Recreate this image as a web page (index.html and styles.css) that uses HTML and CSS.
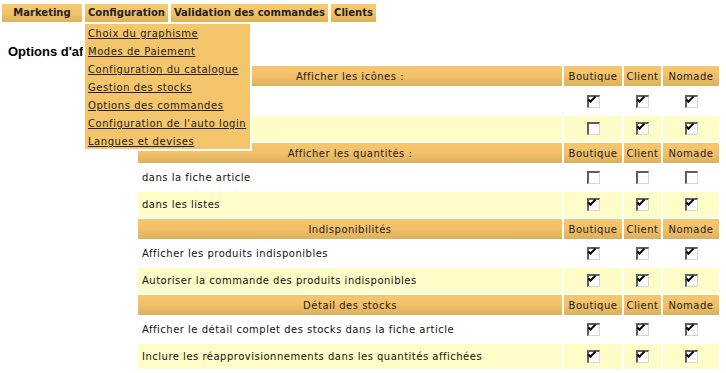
FILE: index.html
```html
<!DOCTYPE html>
<html lang="fr">
<head>
  <meta charset="UTF-8" />
  <title>Options d'affichage des stocks</title>
  <link rel="stylesheet" href="styles.css">
</head>
<body>
  <div class="menubar">
    <div class="menu-item menu-wide">Marketing</div>
    <div class="menu-item">Configuration
      <div class="submenu">
        <a href="#">Choix du graphisme</a>
        <a href="#">Modes de Paiement</a>
        <a href="#">Configuration du catalogue</a>
        <a href="#">Gestion des stocks</a>
        <a href="#">Options des commandes</a>
        <a href="#">Configuration de l'auto login</a>
        <a href="#">Langues et devises</a>
      </div>
    </div>
    <div class="menu-item">Validation des commandes</div>
    <div class="menu-item">Clients</div>
  </div>

  <h1 class="page-title">Options d'affichage des stocks</h1>

  <table class="options">
    <colgroup>
      <col class="col-label">
      <col class="col-boutique">
      <col class="col-client">
      <col class="col-nomade">
    </colgroup>
    <tr class="head">
      <td>Afficher les icônes :</td><td>Boutique</td><td>Client</td><td>Nomade</td>
    </tr>
    <tr class="row tall">
      <td class="label">dans la fiche article</td>
      <td><span class="cb on"></span></td><td><span class="cb on"></span></td><td><span class="cb on"></span></td>
    </tr>
    <tr class="row alt">
      <td class="label">dans les listes</td>
      <td><span class="cb"></span></td><td><span class="cb on"></span></td><td><span class="cb on"></span></td>
    </tr>

    <tr class="head">
      <td>Afficher les quantités :</td><td>Boutique</td><td>Client</td><td>Nomade</td>
    </tr>
    <tr class="row">
      <td class="label">dans la fiche article</td>
      <td><span class="cb"></span></td><td><span class="cb"></span></td><td><span class="cb"></span></td>
    </tr>
    <tr class="row alt">
      <td class="label">dans les listes</td>
      <td><span class="cb on"></span></td><td><span class="cb on"></span></td><td><span class="cb on"></span></td>
    </tr>

    <tr class="head">
      <td>Indisponibilités</td><td>Boutique</td><td>Client</td><td>Nomade</td>
    </tr>
    <tr class="row">
      <td class="label">Afficher les produits indisponibles</td>
      <td><span class="cb on"></span></td><td><span class="cb on"></span></td><td><span class="cb on"></span></td>
    </tr>
    <tr class="row alt">
      <td class="label">Autoriser la commande des produits indisponibles</td>
      <td><span class="cb on"></span></td><td><span class="cb on"></span></td><td><span class="cb on"></span></td>
    </tr>

    <tr class="head">
      <td>Détail des stocks</td><td>Boutique</td><td>Client</td><td>Nomade</td>
    </tr>
    <tr class="row">
      <td class="label">Afficher le détail complet des stocks dans la fiche article</td>
      <td><span class="cb on"></span></td><td><span class="cb on"></span></td><td><span class="cb on"></span></td>
    </tr>
    <tr class="row alt">
      <td class="label">Inclure les réapprovisionnements dans les quantités affichées</td>
      <td><span class="cb on"></span></td><td><span class="cb on"></span></td><td><span class="cb on"></span></td>
    </tr>
  </table>
</body>
</html>
```

FILE: styles.css
```css
body {
  margin: 0;
  background-color: #fff;
  font-family: "DejaVu Sans", Verdana, sans-serif;
  font-size: 10px;
  letter-spacing: 0.5px;
  color: #111;
}
.menubar {
  display: flex;
  gap: 3px;
  margin: 4px 0 0 2px;
}
.menu-item {
  position: relative;
  height: 18px;
  line-height: 18px;
  padding: 0 3px;
  font-weight: bold;
  letter-spacing: 0;
  color: #222;
  text-align: center;
  background: linear-gradient(#f8ca70, #f3c168 55%, #ddb15c);
}
.menu-wide {
  min-width: 74px;
}
.submenu {
  position: absolute;
  top: 18px;
  left: -2px;
  width: 162px;
  height: 124px;
  padding: 1px 0 0 3px;
  background-color: #f5c56b;
  border: 2px solid #fff;
  text-align: left;
  z-index: 2;
}
.submenu a {
  display: block;
  height: 18px;
  line-height: 18px;
  font-weight: normal;
  letter-spacing: 0.55px;
  color: #222;
  text-decoration: underline;
  white-space: nowrap;
}
.page-title {
  margin: 22px 0 0 8px;
  font-family: "Liberation Sans", Arial, sans-serif;
  font-size: 13px;
  line-height: 16px;
  font-weight: bold;
  letter-spacing: 0;
  color: #000;
}
.options {
  margin: 4px 0 0 136px;
  border-spacing: 2px;
  table-layout: fixed;
  width: 585px;
}
.col-label { width: 424px; }
.col-boutique { width: 58px; }
.col-client { width: 37px; }
.col-nomade { width: 56px; }
.options td {
  padding: 0;
  white-space: nowrap;
  overflow: hidden;
}
.head td {
  height: 20px;
  text-align: center;
  color: #222;
  background: linear-gradient(#f6c66c, #f2c068 50%, #dbb05d);
}
.row td {
  height: 25px;
  text-align: center;
}
.tall td {
  height: 26px;
}
.row td.label {
  text-align: left;
  padding-left: 4px;
}
.alt td {
  background-color: #fefdc8;
}
.cb {
  display: inline-block;
  vertical-align: middle;
  box-sizing: border-box;
  width: 13px;
  height: 13px;
  border-style: solid;
  border-width: 2px 1px 1px 2px;
  border-color: #5e5e5e #d6d6d6 #d6d6d6 #5e5e5e;
  background-color: #fff;
  position: relative;
}
.cb.on::after {
  content: "";
  position: absolute;
  left: 1px;
  top: 0;
  width: 6px;
  height: 2px;
  border-style: solid;
  border-color: #000;
  border-width: 0 0 2px 2px;
  transform: translate(0.5px, 2px) rotate(-45deg);
  transform-origin: left bottom;
}
```
